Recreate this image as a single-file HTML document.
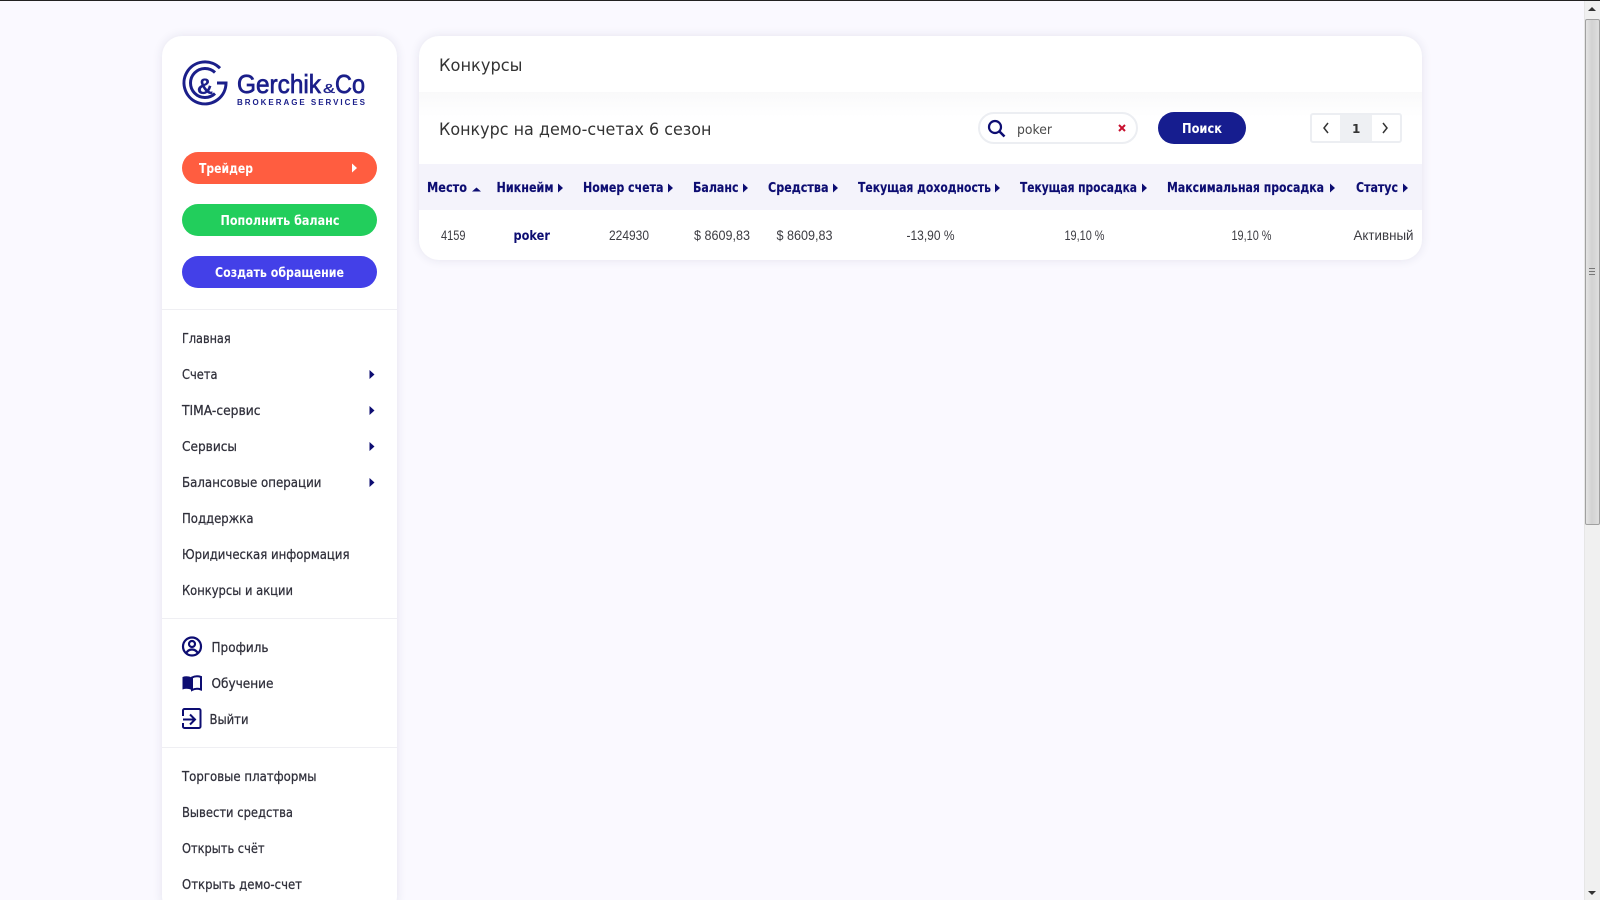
<!DOCTYPE html>
<html lang="ru"><head><meta charset="utf-8"><title>Конкурсы</title>
<style>
html,body{margin:0;padding:0;width:1600px;height:900px;overflow:hidden;background:#faf9ff}
#p{position:absolute;left:0;top:0;width:1600px;height:900px;overflow:hidden;background:#faf9ff}
.b{position:absolute;box-sizing:border-box}
svg{position:absolute;left:0;top:0}
text{font-family:"DejaVu Sans",sans-serif}
.m{font-size:13px;fill:#2f2f3a;stroke:#2f2f3a;stroke-width:.25}
.h{font-size:13.5px;font-weight:700;fill:#0d0d72;stroke:#0d0d72;stroke-width:.15}
.d{font-family:"Liberation Sans",sans-serif;font-size:14px;fill:#3c3c42}
.w{font-size:13.5px;font-weight:700;fill:#fff}
.t{font-size:17px;fill:#333}
.l{font-family:"Liberation Sans",sans-serif;fill:#1b1f8a;stroke:#1b1f8a}
</style></head><body>
<div id="p">
<div class="b" style="left:0;top:0;width:1600px;height:1px;background:#222"></div>
<div class="b" style="left:162px;top:36px;width:235px;height:880px;background:#fff;border-radius:20px;box-shadow:0 0 10px rgba(40,40,90,.10)"></div>
<div class="b" style="left:182px;top:152px;width:195px;height:32px;background:#ff5d40;border-radius:16px"></div>
<div class="b" style="left:182px;top:204px;width:195px;height:32px;background:#22ce5c;border-radius:16px"></div>
<div class="b" style="left:182px;top:256px;width:195px;height:32px;background:#4340e8;border-radius:16px"></div>
<div class="b" style="left:162px;top:309px;width:235px;height:1px;background:#efeff3"></div>
<div class="b" style="left:162px;top:618px;width:235px;height:1px;background:#efeff3"></div>
<div class="b" style="left:162px;top:747px;width:235px;height:1px;background:#efeff3"></div>
<div class="b" style="left:419px;top:36px;width:1003px;height:224px;background:#fff;border-radius:20px;box-shadow:0 0 10px rgba(40,40,90,.10);overflow:hidden">
  <div class="b" style="left:0;top:56px;width:1003px;height:72px;background:linear-gradient(#f9f9fa,#fff 35%)"></div>
  <div class="b" style="left:0;top:128px;width:1003px;height:46px;background:#f4f3fb"></div>
</div>
<div class="b" style="left:978px;top:112px;width:160px;height:32px;background:#fff;border:2px solid #eceef2;border-radius:16px"></div>
<div class="b" style="left:1158px;top:112px;width:88px;height:32px;background:#161d8f;border-radius:16px"></div>
<div class="b" style="left:1310px;top:113px;width:92px;height:30px;background:#fff;border:2px solid #eceef2;border-radius:3px"></div>
<div class="b" style="left:1340px;top:115px;width:32px;height:26px;background:#eef0f3"></div>
<div class="b" style="left:1584px;top:1px;width:16px;height:899px;background:#f0f0f0;border-left:1px solid #e6e6e6"></div>
<div class="b" style="left:1585px;top:19px;width:15px;height:506px;background:linear-gradient(90deg,#e4e4e4,#d2d2d2 45%,#dedede);border:1px solid #a0a0a0;border-radius:2px"></div>

<svg width="1600" height="900" viewBox="0 0 1600 900">
<path d="M1592 7l4 4h-8z" fill="#333"/><path d="M1592 895l4-4h-8z" fill="#333"/>
<path d="M1589 268.500h6M1589 271.500h6M1589 274.500h6" stroke="#777" fill="none"/>
<!-- logo -->
<g fill="none" stroke="#1b1f8a" stroke-width="3">
<path d="M220 68.200A21 21 0 1 0 226 83H217"/>
<path d="M215 72.500A14.500 14.500 0 1 0 215 93.500"/>
</g>
<text class="l" x="197" y="94" font-size="22" font-weight="700" stroke-width=".3" textLength="16" lengthAdjust="spacingAndGlyphs">&amp;</text>
<text class="l" x="237" y="93" font-size="26" stroke-width=".7" textLength="84" lengthAdjust="spacingAndGlyphs">Gerchik</text>
<text class="l" x="323" y="93" font-size="13" stroke-width=".3" textLength="12" lengthAdjust="spacingAndGlyphs">&amp;</text>
<text class="l" x="335" y="93" font-size="26" stroke-width=".7" textLength="30" lengthAdjust="spacingAndGlyphs">Co</text>
<text class="l" x="237" y="105" font-size="8" font-weight="700" stroke-width="0" textLength="128" lengthAdjust="spacing">BROKERAGE SERVICES</text>
<!-- buttons -->
<text class="w" x="199" y="173" textLength="54" lengthAdjust="spacingAndGlyphs">Трейдер</text>
<path d="M352 163.500l5 4.500-5 4.500z" fill="#fff"/>
<text class="w" x="220.500" y="225" textLength="119" lengthAdjust="spacingAndGlyphs">Пополнить баланс</text>
<text class="w" x="215" y="277" textLength="129" lengthAdjust="spacingAndGlyphs">Создать обращение</text>
<!-- menu -->
<text class="m" x="182" y="343" textLength="48.600" lengthAdjust="spacingAndGlyphs">Главная</text>
<text class="m" x="182" y="379" textLength="35.500" lengthAdjust="spacingAndGlyphs">Счета</text>
<text class="m" x="182" y="415" textLength="78.500" lengthAdjust="spacingAndGlyphs">TIMA-сервис</text>
<text class="m" x="182" y="451" textLength="55" lengthAdjust="spacingAndGlyphs">Сервисы</text>
<text class="m" x="182" y="487" textLength="139.500" lengthAdjust="spacingAndGlyphs">Балансовые операции</text>
<text class="m" x="182" y="523" textLength="71.500" lengthAdjust="spacingAndGlyphs">Поддержка</text>
<text class="m" x="182" y="559" textLength="167.500" lengthAdjust="spacingAndGlyphs">Юридическая информация</text>
<text class="m" x="182" y="595" textLength="111" lengthAdjust="spacingAndGlyphs">Конкурсы и акции</text>
<g fill="#0d0d72"><path d="M369.500 370l5 4.500-5 4.500z"/><path d="M369.500 406l5 4.500-5 4.500z"/><path d="M369.500 442l5 4.500-5 4.500z"/><path d="M369.500 478l5 4.500-5 4.500z"/></g>
<!-- profile -->
<g fill="none" stroke="#0d0d72" stroke-width="2.200">
<circle cx="192" cy="646.500" r="9"/><circle cx="192" cy="644" r="3"/><path d="M186 653.500c1.500-3 3.500-4 6-4s4.500 1 6 4"/>
</g>
<path d="M182.500 677c3-1 6-1 9 .5V690c-3-1.500-6-1.500-9-.5z" fill="#0d0d72"/>
<path d="M192 677.500c3-1.500 6-1.500 9-.5v12.500c-3-1-6-1-9 .5z" fill="#fff" stroke="#0d0d72" stroke-width="2"/>
<path d="M183 716v-5.500a1.500 1.500 0 0 1 1.500-1.500H199a1.500 1.500 0 0 1 1.500 1.500v16a1.500 1.500 0 0 1-1.500 1.500H184.500a1.500 1.500 0 0 1-1.500-1.500V723M183 719.500h11M190 714.500l5 5-5 5" fill="none" stroke="#0d0d72" stroke-width="2"/>
<text class="m" x="211.500" y="652" textLength="57" lengthAdjust="spacingAndGlyphs">Профиль</text>
<text class="m" x="211.500" y="688" textLength="62" lengthAdjust="spacingAndGlyphs">Обучение</text>
<text class="m" x="209.500" y="724" textLength="39" lengthAdjust="spacingAndGlyphs">Выйти</text>
<text class="m" x="182" y="781" textLength="134.500" lengthAdjust="spacingAndGlyphs">Торговые платформы</text>
<text class="m" x="182" y="817" textLength="111" lengthAdjust="spacingAndGlyphs">Вывести средства</text>
<text class="m" x="182" y="853" textLength="82.500" lengthAdjust="spacingAndGlyphs">Открыть счёт</text>
<text class="m" x="182" y="889" textLength="120" lengthAdjust="spacingAndGlyphs">Открыть демо-счет</text>
<!-- main titles -->
<text class="t" x="439" y="71" textLength="83.500" lengthAdjust="spacingAndGlyphs">Конкурсы</text>
<text class="t" x="439" y="135" textLength="272.500" lengthAdjust="spacingAndGlyphs">Конкурс на демо-счетах 6 сезон</text>
<!-- search -->
<circle cx="995" cy="127" r="6" fill="none" stroke="#0d0d72" stroke-width="2.200"/><path d="M999.500 131.500l5 5" stroke="#0d0d72" stroke-width="2.600" fill="none"/>
<text x="1017" y="134" font-size="13.500" fill="#4a4a4a" textLength="35" lengthAdjust="spacingAndGlyphs">poker</text>
<path d="M1119 125l6 6M1125 125l-6 6" stroke="#c8102e" stroke-width="2" fill="none"/>
<text class="w" x="1182" y="133" textLength="40" lengthAdjust="spacingAndGlyphs">Поиск</text>
<path d="M1328 123l-4 5 4 5M1383 123l4 5-4 5" stroke="#333" stroke-width="1.500" fill="none"/>
<text x="1352" y="133" font-size="12" font-weight="700" fill="#333">1</text>
<!-- table head -->
<text class="h" x="427" y="192" textLength="40" lengthAdjust="spacingAndGlyphs">Место</text>
<path d="M472 191.500l4.500-4 4.500 4z" fill="#0d0d72"/>
<text class="h" x="496.500" y="192" textLength="57" lengthAdjust="spacingAndGlyphs">Никнейм</text>
<text class="h" x="583" y="192" textLength="80.500" lengthAdjust="spacingAndGlyphs">Номер счета</text>
<text class="h" x="693" y="192" textLength="45.500" lengthAdjust="spacingAndGlyphs">Баланс</text>
<text class="h" x="768" y="192" textLength="60.500" lengthAdjust="spacingAndGlyphs">Средства</text>
<text class="h" x="858" y="192" textLength="133" lengthAdjust="spacingAndGlyphs">Текущая доходность</text>
<text class="h" x="1020" y="192" textLength="117" lengthAdjust="spacingAndGlyphs">Текущая просадка</text>
<text class="h" x="1167" y="192" textLength="157" lengthAdjust="spacingAndGlyphs">Максимальная просадка</text>
<text class="h" x="1356" y="192" textLength="42" lengthAdjust="spacingAndGlyphs">Статус</text>
<g fill="#0d0d72">
<path d="M558 183.500l5 4.500-5 4.500zM668 183.500l5 4.500-5 4.500zM743 183.500l5 4.500-5 4.500zM833 183.500l5 4.500-5 4.500zM995 183.500l5 4.500-5 4.500zM1142 183.500l5 4.500-5 4.500zM1330 183.500l5 4.500-5 4.500zM1403 183.500l5 4.500-5 4.500z"/>
</g>
<!-- row -->
<text class="d" x="441" y="240" textLength="24.500" lengthAdjust="spacingAndGlyphs">4159</text>
<text x="513.500" y="240" font-size="13.500" font-weight="700" fill="#0d0d72" textLength="36.500" lengthAdjust="spacingAndGlyphs">poker</text>
<text class="d" x="609" y="240" textLength="40" lengthAdjust="spacingAndGlyphs">224930</text>
<text class="d" x="694" y="240" textLength="56" lengthAdjust="spacingAndGlyphs">$ 8609,83</text>
<text class="d" x="776.500" y="240" textLength="56" lengthAdjust="spacingAndGlyphs">$ 8609,83</text>
<text class="d" x="906.500" y="240" textLength="48" lengthAdjust="spacingAndGlyphs">-13,90 %</text>
<text class="d" x="1064.500" y="240" textLength="40" lengthAdjust="spacingAndGlyphs">19,10 %</text>
<text class="d" x="1231.500" y="240" textLength="40" lengthAdjust="spacingAndGlyphs">19,10 %</text>
<text class="d" x="1353.500" y="240" textLength="60" lengthAdjust="spacingAndGlyphs">Активный</text>
</svg>
</div>
</body></html>
